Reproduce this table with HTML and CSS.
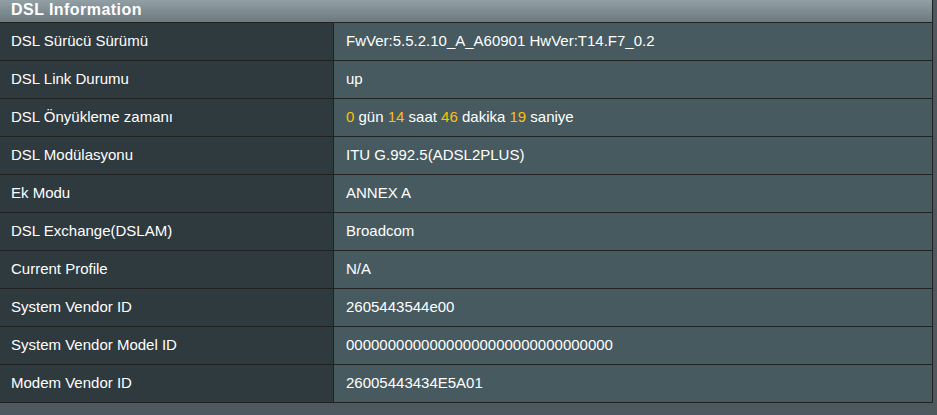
FILE: index.html
```html
<!DOCTYPE html>
<html>
<head>
<meta charset="utf-8">
<link rel="stylesheet" href="styles.css">
</head>
<body>
<div class="panel">
  <div class="head">DSL Information</div>
  <div class="row"><div class="k">DSL Sürücü Sürümü</div><div class="v">FwVer:5.5.2.10_A_A60901 HwVer:T14.F7_0.2</div></div>
  <div class="row"><div class="k">DSL Link Durumu</div><div class="v">up</div></div>
  <div class="row"><div class="k">DSL Önyükleme zamanı</div><div class="v"><span class="n">0</span> gün <span class="n">14</span> saat <span class="n">46</span> dakika <span class="n">19</span> saniye</div></div>
  <div class="row"><div class="k">DSL Modülasyonu</div><div class="v">ITU G.992.5(ADSL2PLUS)</div></div>
  <div class="row"><div class="k">Ek Modu</div><div class="v">ANNEX A</div></div>
  <div class="row"><div class="k">DSL Exchange(DSLAM)</div><div class="v">Broadcom</div></div>
  <div class="row"><div class="k">Current Profile</div><div class="v">N/A</div></div>
  <div class="row"><div class="k">System Vendor ID</div><div class="v">2605443544e00</div></div>
  <div class="row"><div class="k">System Vendor Model ID</div><div class="v">00000000000000000000000000000000</div></div>
  <div class="row"><div class="k">Modem Vendor ID</div><div class="v">26005443434E5A01</div></div>
</div>
</body>
</html>
```

FILE: styles.css
```css
html, body {
  margin: 0;
  padding: 0;
  background: #4d595e;
  font-family: "Liberation Sans", Arial, sans-serif;
  font-size: 15px;
  color: #fff;
}
.panel {
  width: 932px;
  border-right: 1px solid #222;
}
.head {
  box-sizing: border-box;
  height: 23px;
  padding-left: 11px;
  line-height: 20px;
  font-weight: bold;
  font-size: 16px;
  letter-spacing: 0.45px;
  background: linear-gradient(#929fa4, #6c7a80);
  border-bottom: 1px solid #222;
}
.row {
  display: grid;
  grid-template-columns: 334px 1fr;
  height: 38px;
  box-sizing: border-box;
  border-bottom: 1px solid #222;
}
.k {
  background: #2f3a3f;
  border-right: 1px solid #222;
  padding-left: 11px;
  padding-bottom: 2px;
  display: flex;
  align-items: center;
}
.v {
  background: #475a60;
  padding-left: 12px;
  padding-bottom: 2px;
  display: flex;
  align-items: center;
  white-space: pre;
}
.n {
  color: #ffc000;
}
```
